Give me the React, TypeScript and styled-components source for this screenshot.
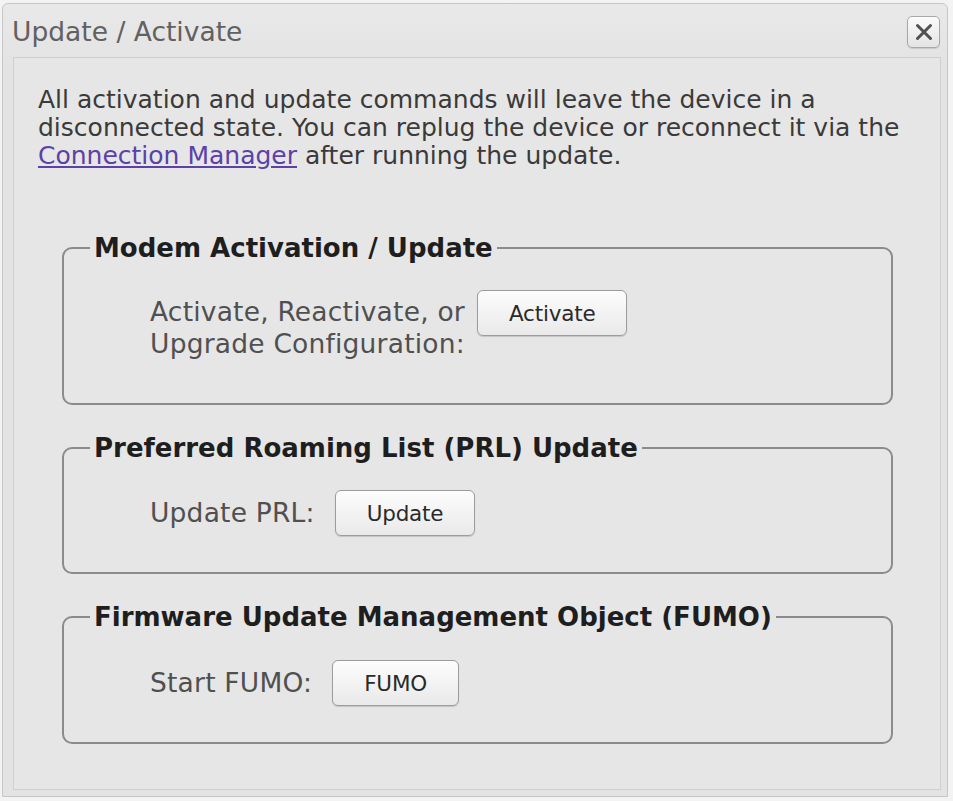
import React from 'react';
import styled, {createGlobalStyle} from 'styled-components';

const GlobalStyle = createGlobalStyle`
	html, body {
		margin: 0;
		padding: 0;
		background: #f3f3f3;
	}
	body {
		font-family: 'DejaVu Sans', 'Liberation Sans', sans-serif;
	}
`;

const Window = styled.div`
	display: flex;
	flex-direction: column;
	box-sizing: border-box;
	margin: 3px 0 0 2px;
	width: 946px;
	height: 794px;
	border: 1px solid #c6c6c6;
	border-radius: 6px 6px 0 0;
	background: linear-gradient(#e9e9e9, #e3e3e3 60px);
`;

const TitleBar = styled.div`
	display: flex;
	align-items: center;
	justify-content: space-between;
	height: 53px;
	padding: 0 7px 0 9px;
	flex-shrink: 0;
`;

const Title = styled.span`
	font-size: 26.5px;
	color: #616161;
	margin-top: 2px;
`;

const CloseButton = styled.button`
	display: flex;
	align-items: center;
	justify-content: center;
	width: 33px;
	height: 32px;
	padding: 0;
	margin-top: 2px;
	border: 1px solid #a8a8a8;
	border-radius: 5px;
	background: linear-gradient(#fbfbfb, #e4e4e4);
	box-shadow: 0 1px 1px rgba(0, 0, 0, 0.12);
	cursor: pointer;
`;

const Panel = styled.div`
	flex: 1;
	margin: 0 6px 6px 10px;
	padding: 28px 20px 0 24px;
	border: 1px solid #d0d0d0;
	background: #e6e6e6;
`;

const Intro = styled.p`
	margin: 0;
	font-size: 25px;
	line-height: 28px;
	color: #3a3a3a;
`;

const Link = styled.a`
	color: #5b41a8;
	text-decoration: underline;
	cursor: pointer;
`;

const Sections = styled.div`
	display: flex;
	flex-direction: column;
	gap: 30px;
	margin: 65px 27px 0 24px;
`;

const Group = styled.fieldset<{$top: number; $bottom: number}>`
	margin: 0;
	padding: ${p => p.$top}px 20px ${p => p.$bottom}px 0;
	border: 2px solid #8b8b8b;
	border-radius: 10px;
	min-inline-size: 0;
`;

const Legend = styled.legend`
	margin-left: 26px;
	padding: 0 4px;
	font-size: 26px;
	line-height: 26px;
	font-weight: bold;
	color: #1e1e1e;
`;

const Row = styled.div<{$gap: number; $align: string}>`
	display: flex;
	align-items: ${p => p.$align};
	gap: ${p => p.$gap}px;
	padding-left: 86px;
`;

const Label = styled.div<{$offset?: number}>`
	margin-top: ${p => p.$offset || 0}px;
	font-size: 26.5px;
	line-height: 32px;
	letter-spacing: 0.2px;
	text-align: center;
	color: #505050;
`;

const Button = styled.button`
	height: 46px;
	padding: 0 31px;
	border: 1px solid #9c9c9c;
	border-radius: 6px;
	background: linear-gradient(#fdfdfd, #e9e9e9);
	box-shadow: 0 1px 1px rgba(0, 0, 0, 0.15);
	font-family: 'DejaVu Sans', sans-serif;
	font-size: 21.5px;
	letter-spacing: -0.2px;
	color: #2a2a2a;
	cursor: pointer;
`;

const CloseIcon = () => (
	<svg width="20" height="20" viewBox="0 0 20 20">
		<path d="M3.5 3.5 L16.5 16.5 M16.5 3.5 L3.5 16.5" stroke="#505050" strokeWidth="3" strokeLinecap="round" />
	</svg>
);

const App = () => (
	<>
		<GlobalStyle />
		<Window>
			<TitleBar>
				<Title>Update / Activate</Title>
				<CloseButton aria-label="Close">
					<CloseIcon />
				</CloseButton>
			</TitleBar>
			<Panel>
				<Intro>
					All activation and update commands will leave the device in a disconnected state. You can
					replug the device or reconnect it via the <Link>Connection Manager</Link> after running the
					update.
				</Intro>
				<Sections>
					<Group $top={29} $bottom={43}>
						<Legend>Modem Activation / Update</Legend>
						<Row $gap={12} $align="flex-start">
							<Label $offset={6}>
								Activate, Reactivate, or
								<br />
								Upgrade Configuration:
							</Label>
							<Button>Activate</Button>
						</Row>
					</Group>
					<Group $top={29} $bottom={36}>
						<Legend>Preferred Roaming List (PRL) Update</Legend>
						<Row $gap={20} $align="center">
							<Label>Update PRL:</Label>
							<Button>Update</Button>
						</Row>
					</Group>
					<Group $top={30} $bottom={36}>
						<Legend>Firmware Update Management Object (FUMO)</Legend>
						<Row $gap={20} $align="center">
							<Label>Start FUMO:</Label>
							<Button>FUMO</Button>
						</Row>
					</Group>
				</Sections>
			</Panel>
		</Window>
	</>
);

export default App;
